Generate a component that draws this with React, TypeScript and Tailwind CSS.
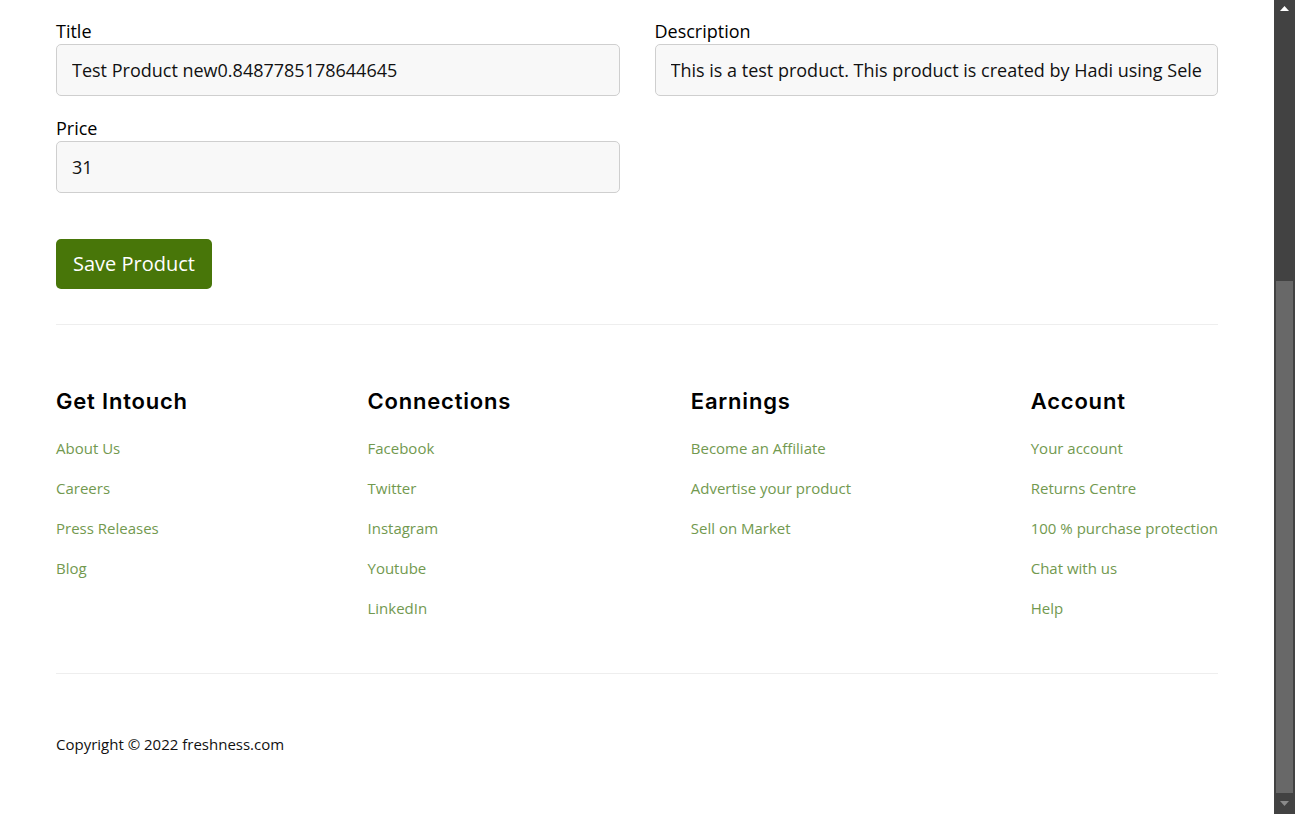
import React from "react";

const sans = { fontFamily: '"Open Sans", "Noto Sans", sans-serif' };

function Field({ label, value }: { label: string; value: string }) {
  return (
    <div className="flex flex-col">
      <label className="text-[18px] leading-[24px] text-black mb-[1px]">{label}</label>
      <input
        readOnly
        defaultValue={value}
        className="h-[52px] w-full rounded-[5px] border border-[#cfcfcf] bg-[#f8f8f8] px-[15px] text-[18px] text-[#111] outline-none"
        style={sans}
      />
    </div>
  );
}

function Col({ title, links }: { title: string; links: string[] }) {
  return (
    <div className="flex flex-col">
      <h3
        className="text-[22px] leading-[32px] font-semibold text-black tracking-[0.8px]"
        style={{ fontFamily: 'Inter, "Noto Sans", sans-serif' }}
      >
        {title}
      </h3>
      <ul className="mt-[19px] flex flex-col gap-[16px]">
        {links.map((l) => (
          <li key={l} className="text-[15px] leading-[24px] text-[#72994f] whitespace-nowrap">
            {l}
          </li>
        ))}
      </ul>
    </div>
  );
}

export default function App() {
  return (
    <div className="flex h-[814px] w-full overflow-hidden bg-white" style={sans}>
      <div className="flex-1 px-[56px] pt-[19px]">
        <div className="grid grid-cols-2 gap-x-[35px] gap-y-[20px]">
          <Field label="Title" value="Test Product new0.8487785178644645" />
          <Field
            label="Description"
            value="This is a test product. This product is created by Hadi using Selenium automation testing"
          />
          <Field label="Price" value="31" />
        </div>
        <button className="mt-[46px] h-[50px] w-[156px] rounded-[5px] bg-[#487609] text-white text-[20px]">
          Save Product
        </button>
        <hr className="mt-[35px] border-0 border-t border-[#eeeeee]" />
        <div className="mt-[60px] flex justify-between">
          <Col title="Get Intouch" links={["About Us", "Careers", "Press Releases", "Blog"]} />
          <Col title="Connections" links={["Facebook", "Twitter", "Instagram", "Youtube", "LinkedIn"]} />
          <Col title="Earnings" links={["Become an Affiliate", "Advertise your product", "Sell on Market"]} />
          <Col
            title="Account"
            links={["Your account", "Returns Centre", "100 % purchase protection", "Chat with us", "Help"]}
          />
        </div>
        <hr className="mt-[53px] border-0 border-t border-[#eeeeee]" />
        <p className="mt-[58px] text-[15px] leading-[24px] text-[#111]">Copyright © 2022 freshness.com</p>
      </div>
      <div className="w-[21px] h-full bg-[#424242] flex flex-col items-center">
        <div className="h-[17px] flex items-center justify-center">
          <svg width="9" height="5" viewBox="0 0 9 5">
            <polygon points="4.5,0 9,5 0,5" fill="#ffffff" />
          </svg>
        </div>
        <div className="h-[264px]" />
        <div className="w-[17px] h-[512px] bg-[#686868]" />
        <div className="flex-1 flex items-center justify-center">
          <svg width="9" height="5" viewBox="0 0 9 5">
            <polygon points="0,0 9,0 4.5,5" fill="#8a8a8a" />
          </svg>
        </div>
      </div>
    </div>
  );
}
